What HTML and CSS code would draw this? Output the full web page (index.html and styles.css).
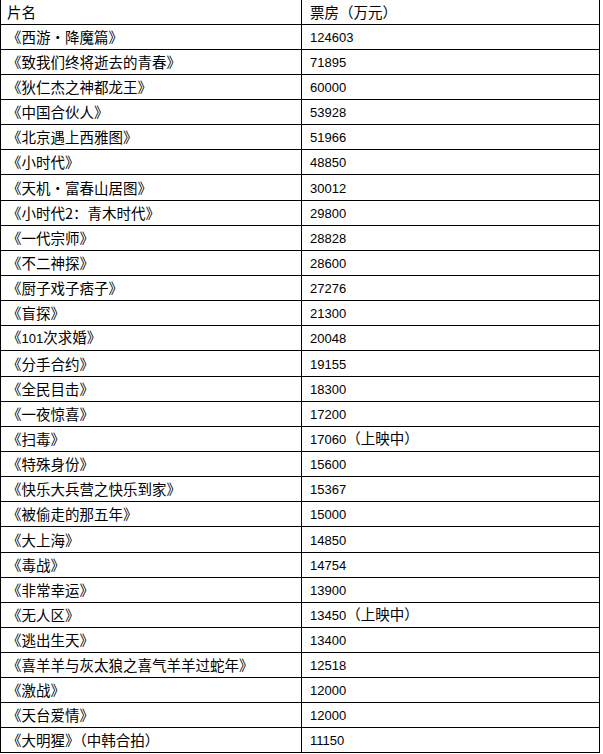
FILE: index.html
```html
<!DOCTYPE html>
<html lang="zh">
<head>
<meta charset="utf-8">
<title>票房</title>
<link rel="stylesheet" href="styles.css">
</head>
<body>
<table class="box">
<colgroup><col class="c1"><col class="c2"></colgroup>
<tbody>
<tr class="head"><td>片名</td><td>票房（万元）</td></tr>
<tr><td>《西游・降魔篇》</td><td><span class="n">124603</span></td></tr>
<tr><td>《致我们终将逝去的青春》</td><td><span class="n">71895</span></td></tr>
<tr><td>《狄仁杰之神都龙王》</td><td><span class="n">60000</span></td></tr>
<tr><td>《中国合伙人》</td><td><span class="n">53928</span></td></tr>
<tr><td>《北京遇上西雅图》</td><td><span class="n">51966</span></td></tr>
<tr><td>《小时代》</td><td><span class="n">48850</span></td></tr>
<tr class="tall"><td>《天机・富春山居图》</td><td><span class="n">30012</span></td></tr>
<tr><td>《小时代2：青木时代》</td><td><span class="n">29800</span></td></tr>
<tr><td>《一代宗师》</td><td><span class="n">28828</span></td></tr>
<tr><td>《不二神探》</td><td><span class="n">28600</span></td></tr>
<tr><td>《厨子戏子痞子》</td><td><span class="n">27276</span></td></tr>
<tr><td>《盲探》</td><td><span class="n">21300</span></td></tr>
<tr><td>《<span class="n">101</span>次求婚》</td><td><span class="n">20048</span></td></tr>
<tr class="tall"><td>《分手合约》</td><td><span class="n">19155</span></td></tr>
<tr><td>《全民目击》</td><td><span class="n">18300</span></td></tr>
<tr><td>《一夜惊喜》</td><td><span class="n">17200</span></td></tr>
<tr><td>《扫毒》</td><td><span class="n">17060</span>（上映中）</td></tr>
<tr><td>《特殊身份》</td><td><span class="n">15600</span></td></tr>
<tr><td>《快乐大兵营之快乐到家》</td><td><span class="n">15367</span></td></tr>
<tr><td>《被偷走的那五年》</td><td><span class="n">15000</span></td></tr>
<tr class="tall"><td>《大上海》</td><td><span class="n">14850</span></td></tr>
<tr><td>《毒战》</td><td><span class="n">14754</span></td></tr>
<tr><td>《非常幸运》</td><td><span class="n">13900</span></td></tr>
<tr><td>《无人区》</td><td><span class="n">13450</span>（上映中）</td></tr>
<tr><td>《逃出生天》</td><td><span class="n">13400</span></td></tr>
<tr><td>《喜羊羊与灰太狼之喜气羊羊过蛇年》</td><td><span class="n">12518</span></td></tr>
<tr><td>《激战》</td><td><span class="n">12000</span></td></tr>
<tr><td>《天台爱情》</td><td><span class="n">12000</span></td></tr>
<tr><td>《大明猩》（中韩合拍）</td><td><span class="n">11150</span></td></tr>
</tbody>
</table>
</body>
</html>
```

FILE: styles.css
```css
html, body {
  margin: 0;
  padding: 0;
  background: #ffffff;
}

.box {
  border-collapse: separate;
  border-spacing: 0;
  table-layout: fixed;
  width: 600px;
  border-left: 1px solid #000;
  font-family: "Noto Sans CJK SC", "Noto Sans CJK JP", sans-serif;
  font-size: 14.5px;
  color: #000;
}

.c1 { width: 301px; }
.c2 { width: 298px; }

.box td {
  height: 25px;
  padding: 0 0 0 6px;
  box-sizing: border-box;
  border-right: 1px solid #000;
  border-bottom: 1px solid #000;
  line-height: 16px;
  vertical-align: middle;
  white-space: nowrap;
  overflow: hidden;
}

.box tr.head td { height: 25px; }
.box tr.tall td { height: 26px; }

.box td:nth-child(2) { padding-left: 8px; }

.n {
  font-family: "Liberation Sans", sans-serif;
  font-size: 13px;
}
```
